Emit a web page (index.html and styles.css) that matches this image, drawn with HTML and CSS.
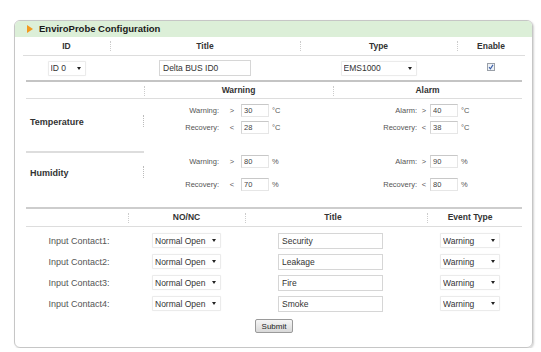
FILE: index.html
```html
<!DOCTYPE html>
<html lang="en">
<head>
    <meta charset="UTF-8">
    <title>EnviroProbe Configuration</title>
    <link rel="stylesheet" href="styles.css">
</head>
<body>
    <div class="panel">
        <div class="panel-title"><span class="caret"></span>EnviroProbe Configuration</div>
        <div class="panel-body">

            <!-- probe selection -->
            <div class="probe">
                <div class="th">ID</div>
                <div class="th">Title</div>
                <div class="th">Type</div>
                <div class="th">Enable</div>
                <div class="td"><span class="sel sel-id"><select><option>ID 0</option></select></span></div>
                <div class="td"><input class="txt txt-name" type="text" value="Delta BUS ID0"></div>
                <div class="td"><span class="sel sel-type"><select><option>EMS1000</option></select></span></div>
                <div class="td">
                    <span class="check">
                        <svg width="8" height="8" viewBox="0 0 8 8"><rect x="0.5" y="0.5" width="7" height="7" fill="#eef2f7" stroke="#9aa0a8"/><path d="M2 4.2 L3.4 5.8 L6 1.9" fill="none" stroke="#3a5fa8" stroke-width="1.1"/></svg>
                    </span>
                </div>
            </div>

            <!-- temperature / humidity limits -->
            <div class="limits">
                <div class="th"></div>
                <div class="th">Warning</div>
                <div class="th">Alarm</div>

                <div class="sensor sensor-temp"><span>Temperature</span></div>
                <div class="lims lims-temp">
                    <div class="lim"><label>Warning:</label><span class="op">&gt;</span><input class="num" type="text" value="30"><span class="unit">°C</span></div>
                    <div class="lim"><label>Recovery:</label><span class="op">&lt;</span><input class="num" type="text" value="28"><span class="unit">°C</span></div>
                </div>
                <div class="lims lims-temp alarm">
                    <div class="lim"><label>Alarm:</label><span class="op">&gt;</span><input class="num" type="text" value="40"><span class="unit">°C</span></div>
                    <div class="lim"><label>Recovery:</label><span class="op">&lt;</span><input class="num" type="text" value="38"><span class="unit">°C</span></div>
                </div>

                <div class="sensor sensor-hum"><span>Humidity</span></div>
                <div class="lims lims-hum">
                    <div class="lim"><label>Warning:</label><span class="op">&gt;</span><input class="num" type="text" value="80"><span class="unit">%</span></div>
                    <div class="lim"><label>Recovery:</label><span class="op">&lt;</span><input class="num" type="text" value="70"><span class="unit">%</span></div>
                </div>
                <div class="lims lims-hum alarm">
                    <div class="lim"><label>Alarm:</label><span class="op">&gt;</span><input class="num" type="text" value="90"><span class="unit">%</span></div>
                    <div class="lim"><label>Recovery:</label><span class="op">&lt;</span><input class="num" type="text" value="80"><span class="unit">%</span></div>
                </div>
            </div>

            <!-- input contacts -->
            <div class="contacts">
                <div class="th"></div>
                <div class="th">NO/NC</div>
                <div class="th th-title">Title</div>
                <div class="th th-event">Event Type</div>

                <div class="name">Input Contact1:</div>
                <div class="td"><span class="sel sel-nonc"><select><option>Normal Open</option></select></span></div>
                <div class="td td-title"><input class="txt txt-contact" type="text" value="Security"></div>
                <div class="td td-event"><span class="sel sel-event"><select><option>Warning</option></select></span></div>

                <div class="name">Input Contact2:</div>
                <div class="td"><span class="sel sel-nonc"><select><option>Normal Open</option></select></span></div>
                <div class="td td-title"><input class="txt txt-contact" type="text" value="Leakage"></div>
                <div class="td td-event"><span class="sel sel-event"><select><option>Warning</option></select></span></div>

                <div class="name">Input Contact3:</div>
                <div class="td"><span class="sel sel-nonc"><select><option>Normal Open</option></select></span></div>
                <div class="td td-title"><input class="txt txt-contact" type="text" value="Fire"></div>
                <div class="td td-event"><span class="sel sel-event"><select><option>Warning</option></select></span></div>

                <div class="name">Input Contact4:</div>
                <div class="td"><span class="sel sel-nonc"><select><option>Normal Open</option></select></span></div>
                <div class="td td-title"><input class="txt txt-contact" type="text" value="Smoke"></div>
                <div class="td td-event"><span class="sel sel-event"><select><option>Warning</option></select></span></div>
            </div>

            <div class="actions"><button type="submit">Submit</button></div>
        </div>
    </div>
</body>
</html>
```

FILE: styles.css
```css
body {
    margin: 0;
    background: #fff;
    font-family: "Liberation Sans", Arial, sans-serif;
    color: #333;
}
.panel {
    box-sizing: border-box;
    margin: 20px 0 0 14px;
    width: 519px;
    height: 328px;
    border: 1px solid #c6c6c6;
    border-radius: 6px;
    box-shadow: 1px 1px 2px rgba(0, 0, 0, 0.18);
}
.panel-title {
    height: 16px;
    line-height: 16px;
    background: #dcefd8;
    border-radius: 5px 5px 0 0;
    font-size: 9.5px;
    font-weight: bold;
    color: #1a1a1a;
    display: flex;
    align-items: center;
}
.caret {
    width: 0;
    height: 0;
    margin: 0 6px 0 12px;
    border-top: 4px solid transparent;
    border-bottom: 4px solid transparent;
    border-left: 6px solid #f29a1f;
}
.panel-body {
    padding: 0 7px 0 8px;
}

/* header cells shared by all three grids */
.th {
    position: relative;
    text-align: center;
    font-size: 8.5px;
    font-weight: bold;
    color: #333;
    border-bottom: 1px solid #ddd;
}
.th + .th::before {
    content: '';
    position: absolute;
    left: 0;
    top: 4px;
    height: 10px;
    border-left: 1px dotted #ccc;
}

/* selects with a small black arrow */
.sel {
    position: relative;
    display: inline-flex;
}
.sel select {
    -webkit-appearance: none;
    appearance: none;
    box-sizing: border-box;
    height: 15px;
    margin: 0;
    padding: 0 0 0 2px;
    border: 1px solid #ebebeb;
    border-radius: 1px;
    background: #fff;
    box-shadow: 0 0 1px rgba(0, 0, 0, 0.08);
    font-family: inherit;
    font-size: 8.5px;
    color: #333;
}
.sel::after {
    content: '';
    position: absolute;
    right: 5px;
    top: 6px;
    border-left: 2.5px solid transparent;
    border-right: 2.5px solid transparent;
    border-top: 3px solid #222;
}
.sel-id select { width: 38px; }
.sel-type select { width: 76px; }
.sel-nonc select { width: 69px; }
.sel-event select { width: 60px; }

.txt {
    box-sizing: border-box;
    height: 16px;
    padding: 0 3px;
    border: 1px solid #d6d6d6;
    font-family: inherit;
    font-size: 8.5px;
    color: #333;
}
.txt-name { width: 92px; }
.txt-contact { width: 105px; }

/* probe row */
.probe {
    display: grid;
    grid-template-columns: 87px 190px 157px 68px;
}
.probe .th {
    height: 18px;
    line-height: 18px;
}
.probe .td {
    height: 24px;
    display: flex;
    align-items: center;
    justify-content: center;
}
.check {
    display: flex;
    margin-top: -3px;
}

/* limits */
.limits {
    margin: 0 3px;
    border-top: 2px solid #c4c4c4;
    display: grid;
    grid-template-columns: 118px 189px 189px;
}
.limits .th {
    height: 16px;
    line-height: 16px;
}
.sensor {
    box-sizing: border-box;
    position: relative;
    font-size: 9px;
    font-weight: bold;
    color: #333;
    padding-left: 4px;
    line-height: 12px;
}
.sensor::after {
    content: '';
    position: absolute;
    right: 0;
    height: 12px;
    border-left: 1px dotted #bbb;
}
.sensor-temp {
    height: 54px;
    padding-top: 17px;
    border-bottom: 2px solid #ddd;
}
.sensor-temp::after { top: 16px; }
.sensor-hum {
    height: 54px;
    padding-top: 14px;
}
.sensor-hum::after { top: 13px; }

.lims-temp { padding-top: 3px; }
.lims-hum .lim + .lim { margin-top: 6px; }
.lim {
    height: 17px;
    display: flex;
    align-items: center;
    justify-content: flex-end;
    padding-right: 41px;
    font-size: 7.5px;
    color: #555;
}
.lim label {
    text-align: right;
}
.op {
    width: 8px;
    margin: 0 5px 0 9px;
    text-align: center;
}
.alarm .op {
    margin: 0 2px 0 3px;
}
.num {
    box-sizing: border-box;
    width: 28px;
    height: 13px;
    padding: 0 2px;
    border: 1px solid #e6e6e6;
    border-top-color: #c8c8c8;
    border-left-color: #d4d4d4;
    font-family: inherit;
    font-size: 7.5px;
    color: #444;
}
.unit {
    width: 20px;
    margin-left: 3px;
}

/* input contacts */
.contacts {
    margin: 0 3px;
    border-top: 2px solid #cdcdcd;
    display: grid;
    grid-template-columns: 102px 117px 182px 95px;
    grid-auto-rows: 21px;
}
.contacts .th {
    height: 17px;
    line-height: 17px;
}
.contacts .th-event {
    text-indent: -9px;
}
.contacts .th-title {
    text-indent: -6px;
}
.name {
    display: flex;
    align-items: center;
    justify-content: center;
    padding-left: 4px;
    font-size: 9px;
    color: #555;
}
.contacts .td {
    display: flex;
    align-items: center;
    justify-content: center;
}
.contacts .td-title,
.contacts .td-event {
    justify-content: flex-start;
}
.contacts .td-title { padding-left: 33px; }
.contacts .td-event { padding-left: 13px; }

.actions {
    display: flex;
    justify-content: center;
    padding-top: 5px;
}
.actions button {
    height: 14px;
    padding: 0 6px;
    border: 1px solid #9a9a9a;
    border-radius: 2px;
    background: linear-gradient(#f6f6f6, #d9d9d9);
    font-family: inherit;
    font-size: 8px;
    color: #222;
}
```
